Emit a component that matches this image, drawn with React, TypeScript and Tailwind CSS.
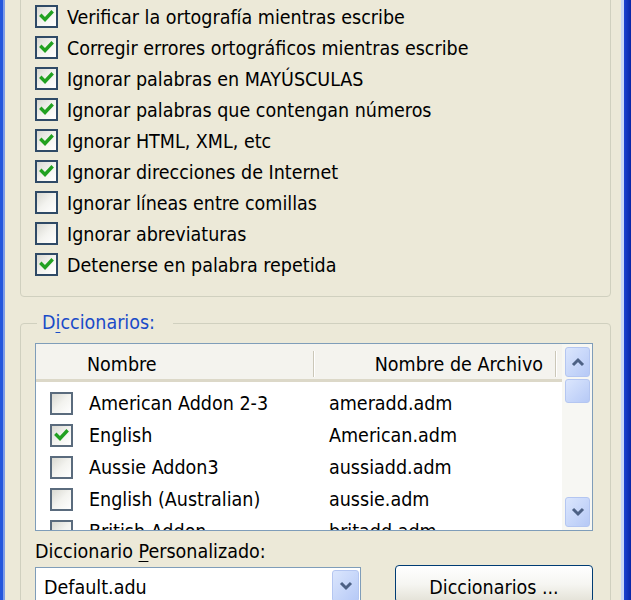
import React from "react";

const FONT = "font-['DejaVu_Sans_Condensed','Liberation_Sans',Arial,sans-serif]";

function Check({ checked, list }: { checked: boolean; list?: boolean }) {
  return (
    <div
      className={`w-[23px] h-[23px] shrink-0 border-2 ${
        list ? "border-[#5a6b7d]" : "border-[#2f4a66]"
      } bg-linear-to-br from-[#d9d9d2] via-[#f3f3ef] to-white flex items-center justify-center`}
    >
      {checked && (
        <svg width="19" height="19" viewBox="0 0 19 19">
          <polyline
            points="4.5,9 8,12.5 14.5,5.5"
            fill="none"
            stroke="#21a121"
            strokeWidth="3.4"
            strokeLinecap="square"
          />
        </svg>
      )}
    </div>
  );
}

function Arrow({ dir }: { dir: "up" | "down" }) {
  return (
    <svg width="14" height="10" viewBox="0 0 14 10">
      <polyline
        points={dir === "up" ? "2,8 7,3 12,8" : "2,2 7,7 12,2"}
        fill="none"
        stroke="#4d6185"
        strokeWidth="3"
      />
    </svg>
  );
}

function ScrollBtn({ children, h }: { children?: React.ReactNode; h: string }) {
  return (
    <div
      className={`${h} rounded-[3px] border border-[#b4c6f1] bg-linear-to-br from-[#dbe6fd] to-[#b6c9f6] flex items-center justify-center`}
    >
      {children}
    </div>
  );
}

const options: [string, boolean][] = [
  ["Verificar la ortografía mientras escribe", true],
  ["Corregir errores ortográficos mientras escribe", true],
  ["Ignorar palabras en MAYÚSCULAS", true],
  ["Ignorar palabras que contengan números", true],
  ["Ignorar HTML, XML, etc", true],
  ["Ignorar direcciones de Internet", true],
  ["Ignorar líneas entre comillas", false],
  ["Ignorar abreviaturas", false],
  ["Detenerse en palabra repetida", true],
];

const dicts: [string, string, boolean][] = [
  ["American Addon 2-3", "ameradd.adm", false],
  ["English", "American.adm", true],
  ["Aussie Addon3", "aussiadd.adm", false],
  ["English (Australian)", "aussie.adm", false],
  ["British Addon", "britadd.adm", false],
];

function Separator() {
  return <div className="w-[2px] h-[26px] self-end mb-[2px] border-l border-[#cbc7b8] border-r border-r-white" />;
}

export default function App() {
  return (
    <div className={`w-[631px] h-[600px] overflow-hidden flex bg-[#ece9d8] text-black ${FONT} text-[19.5px]`}>
      <div className="w-[3px] bg-[#2456dc]" />
      <div className="w-[2px] bg-[#7d9ce8]" />
      <div className="flex-1 flex flex-col pl-[15px] pr-[10px]">
        {/* Group 1 */}
        <div className="-mt-[20px] border border-[#d0d0bf] rounded-[4px] pt-[20px] pb-[16px] px-[14px] flex flex-col">
          {options.map(([label, c]) => (
            <div key={label} className="h-[31px] flex items-center gap-[9px]">
              <Check checked={c} />
              <span className="leading-[22px] pt-[2px] whitespace-nowrap">{label}</span>
            </div>
          ))}
        </div>

        {/* Group 2 */}
        <fieldset className="mt-[16px] border border-[#d0d0bf] rounded-[4px] pl-[14px] pr-[17px] pt-[10px] pb-[20px]">
          <legend className="ml-[2px] pl-[5px] pr-[18px] leading-[20px] text-[#1a4bc8]">
            D<span className="underline underline-offset-[3px]">i</span>ccionarios:
          </legend>

          <div className="h-[188px] border border-[#7f9db9] bg-white flex">
            <div className="flex-1 flex flex-col overflow-hidden">
              <div className="h-[38px] shrink-0 flex bg-[#f4f3ee] border-b-[3px] border-[#dcd8c8]">
                <div className="w-[277px] pl-[51px] pt-[6px] flex items-center">Nombre</div>
                <Separator />
                <div className="w-[240px] pr-[12px] pt-[6px] flex items-center justify-end whitespace-nowrap">
                  Nombre de Archivo
                </div>
                <Separator />
                <div className="flex-1" />
              </div>
              <div className="pt-[5px] flex flex-col">
                {dicts.map(([name, file, c]) => (
                  <div key={name} className="h-[32px] shrink-0 flex items-center">
                    <div className="w-[279px] pl-[14px] flex items-center gap-[16px]">
                      <Check checked={c} list />
                      <span className="whitespace-nowrap leading-[22px] pt-[2px]">{name}</span>
                    </div>
                    <div className="pl-[14px] whitespace-nowrap leading-[22px] pt-[2px]">{file}</div>
                  </div>
                ))}
              </div>
            </div>
            <div className="w-[30px] shrink-0 bg-[#f7f7f3] pl-[3px] pr-[2px] pt-[3px] pb-[3px] flex flex-col">
              <ScrollBtn h="h-[30px]">
                <Arrow dir="up" />
              </ScrollBtn>
              <div className="mt-[2px]">
                <ScrollBtn h="h-[24px]" />
              </div>
              <div className="flex-1" />
              <ScrollBtn h="h-[30px]">
                <Arrow dir="down" />
              </ScrollBtn>
            </div>
          </div>

          <div className="mt-[11px] leading-[20px]">
            Diccionario <span className="underline underline-offset-[3px]">P</span>ersonalizado:
          </div>

          <div className="mt-[3px] flex items-start">
            <div className="mt-[2px] w-[326px] h-[36px] border border-[#7f9db9] bg-white flex">
              <div className="flex-1 pl-[8px] pt-[10px] leading-[20px]">Default.adu</div>
              <div className="mt-[2px] mr-[1px] w-[27px] h-[32px]">
                <ScrollBtn h="h-[32px]">
                  <Arrow dir="down" />
                </ScrollBtn>
              </div>
            </div>
            <div className="ml-[34px] w-[198px] h-[38px] rounded-[4px] border border-[#003c74] bg-linear-to-b from-white via-[#f6f6f2] to-[#e3e1d6] pt-[12px] leading-[20px] text-center">
              Diccionarios ...
            </div>
          </div>
        </fieldset>
      </div>
      <div className="w-[3px] bg-[#c9d6f6]" />
      <div className="w-[7px] bg-linear-to-r from-[#1c42d0] to-[#0a26a6]" />
    </div>
  );
}
